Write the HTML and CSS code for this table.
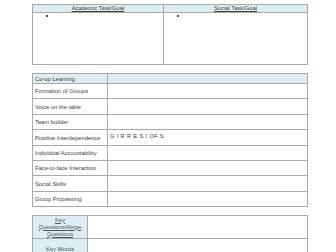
FILE: index.html
```html
<!DOCTYPE html>
<html>
<head>
<meta charset="utf-8">
<link rel="stylesheet" href="styles.css">
</head>
<body>
<div class="page">
  <div class="grid goals">
    <div class="cell head center"><u>Academic Task/Goal</u></div>
    <div class="cell head center"><u>Social Task/Goal</u></div>
    <div class="cell body"><ul class="bullets"><li></li></ul></div>
    <div class="cell body"><ul class="bullets"><li></li></ul></div>
  </div>

  <div class="grid coop">
    <div class="cell head label">Co-op Learning</div>
    <div class="cell head"></div>
    <div class="cell label">Formation of Groups</div>
    <div class="cell"></div>
    <div class="cell label">Voice on the table</div>
    <div class="cell"></div>
    <div class="cell label">Team builder</div>
    <div class="cell"></div>
    <div class="cell label">Positive Interdependence</div>
    <div class="cell top"><span class="spaced">G I R R E S I OF S</span></div>
    <div class="cell label">Individual Accountability</div>
    <div class="cell"></div>
    <div class="cell label">Face-to-face Interaction</div>
    <div class="cell"></div>
    <div class="cell label">Social Skills</div>
    <div class="cell"></div>
    <div class="cell label">Group Processing</div>
    <div class="cell"></div>
  </div>

  <div class="grid keys">
    <div class="cell side"><u>Key<br>Questions/Hinge<br>Questions</u></div>
    <div class="cell"></div>
    <div class="cell side"><u>Key Words</u></div>
    <div class="cell"></div>
  </div>
</div>
</body>
</html>
```

FILE: styles.css
```css
html, body {
  margin: 0;
  padding: 0;
  background: #ffffff;
}

body {
  font-family: "Liberation Sans", Arial, sans-serif;
  font-size: 5.8px;
  color: #404040;
}

.page {
  padding: 4px 0 0 32px;
  width: 276px;
  display: flex;
  flex-direction: column;
  gap: 8px;
}

.grid {
  display: grid;
  gap: 1px;
  padding: 1px;
  background: #a9a9a9;
}

.cell {
  background: #ffffff;
  display: flex;
  align-items: center;
  min-width: 0;
  white-space: nowrap;
}

.head {
  background: #dcedf3;
}

.center {
  justify-content: center;
}

.goals {
  grid-template-columns: 130px 143px;
  grid-template-rows: 7px 51px;
}

.goals .head {
  line-height: 7px;
}

.body {
  align-items: flex-start;
}

.bullets {
  margin: 0;
  padding: 0 0 0 13px;
  list-style: none;
}

.bullets li {
  width: 2px;
  height: 2px;
  margin-top: 2px;
  border-radius: 50%;
  background: #111111;
}

.coop {
  grid-template-columns: 74px 199px;
  grid-template-rows: 9px 14px 15px 14px 15px 14px 14px 15px 14px;
}

.label {
  padding-left: 2px;
}

.top {
  align-items: flex-start;
  padding: 3px 0 0 2px;
}

.spaced {
  letter-spacing: 0.3px;
}

.keys {
  grid-template-columns: 54px 219px;
  grid-template-rows: 22px 20px;
}

.side {
  background: #dcedf3;
  justify-content: center;
  text-align: center;
  line-height: 7px;
  color: #4a545a;
}
```
